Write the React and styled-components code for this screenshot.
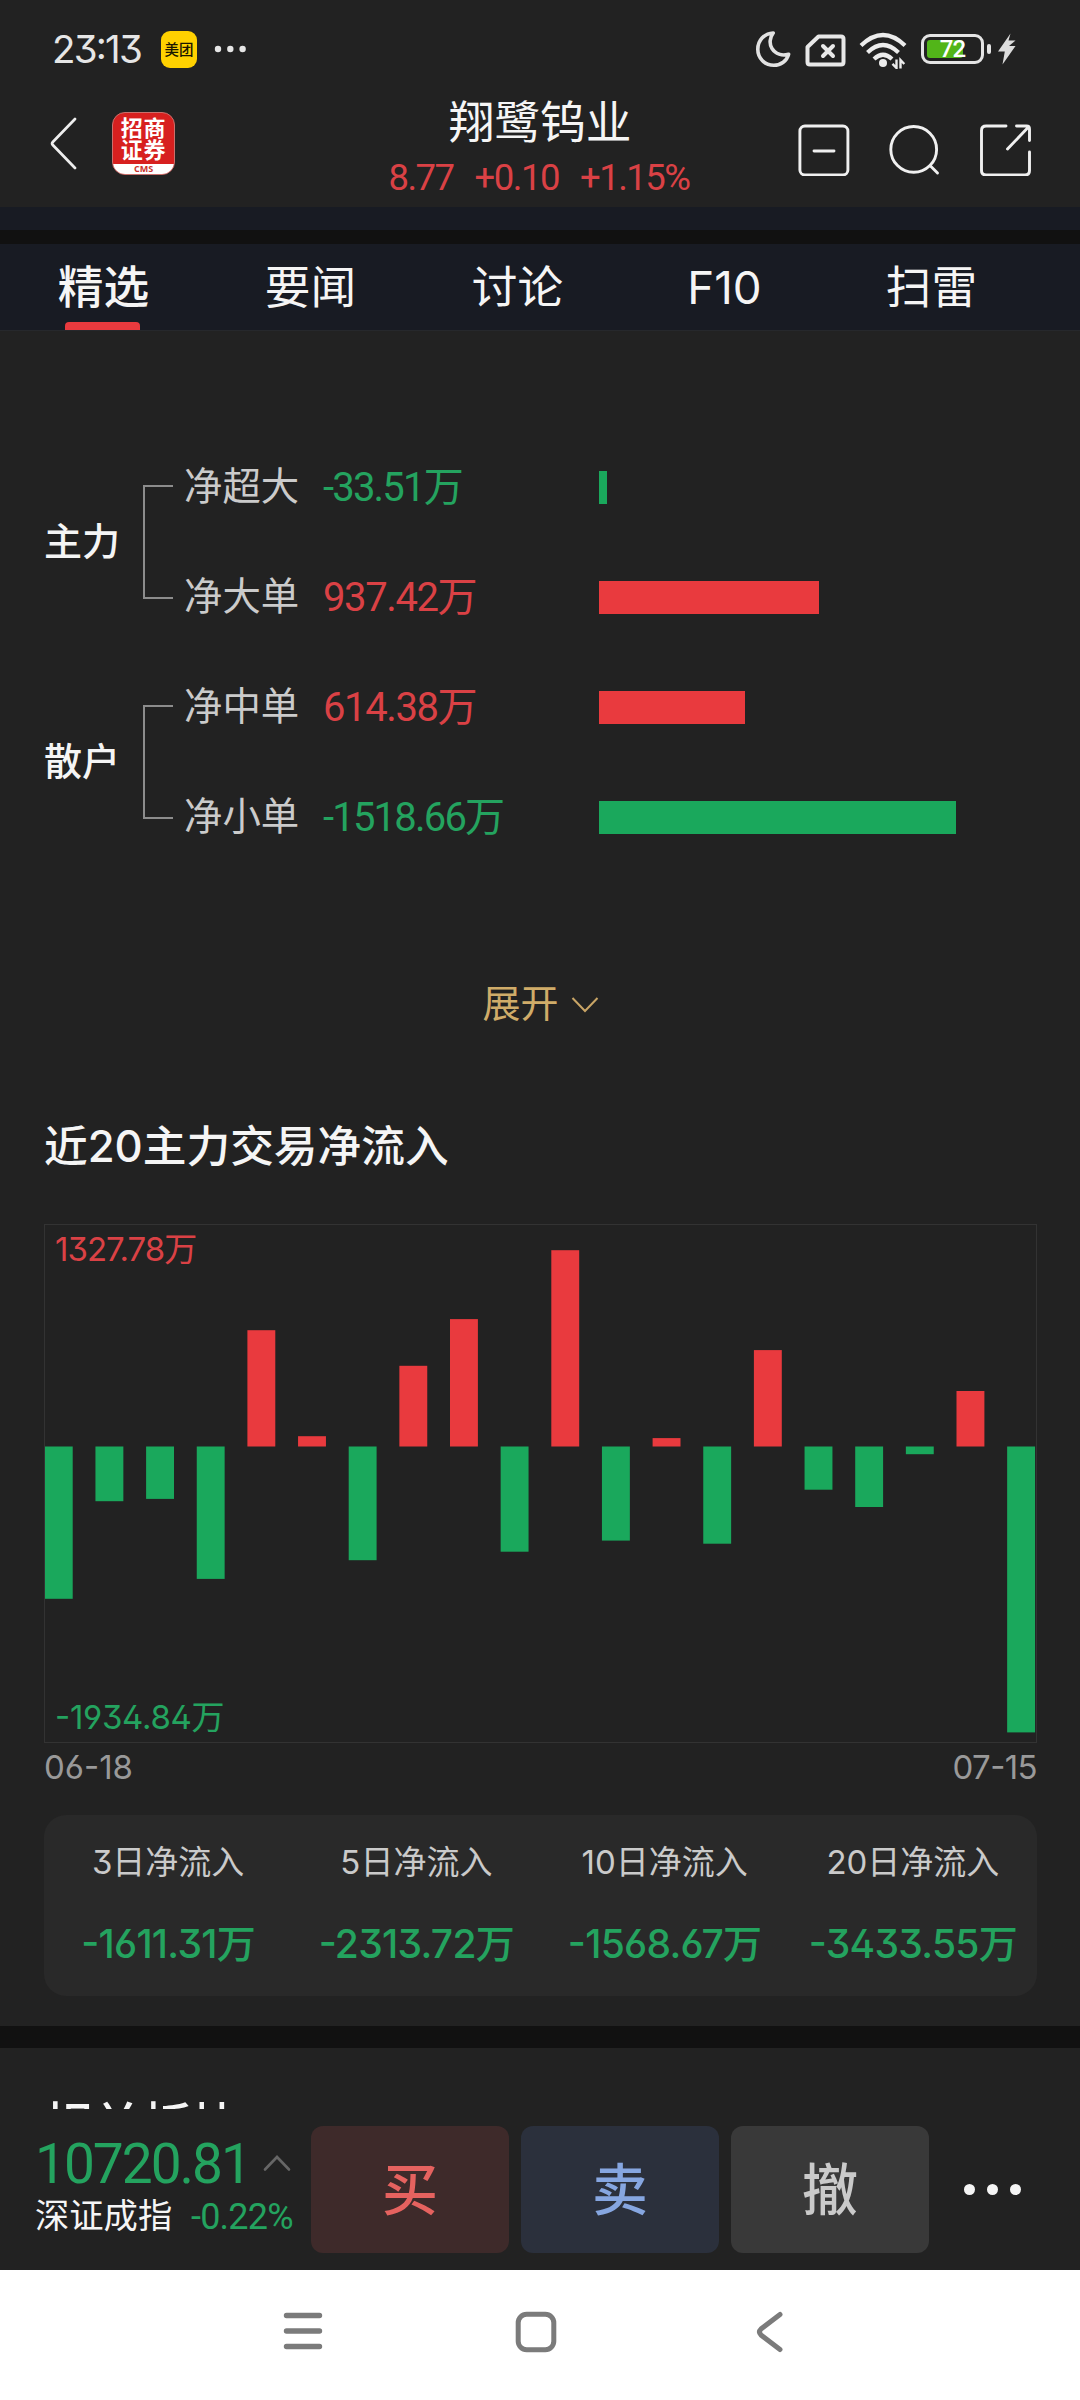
import React from "react";
import styled, { createGlobalStyle } from "styled-components";

const RED = "#e93a3e";
const GREEN = "#1aa85c";
const TEXT_RED = "#da4145";
const TEXT_GREEN = "#24a35f";

const tabs = ["精选", "要闻", "讨论", "F10", "扫雷"];

const groups = [
  {
    name: "主力",
    rows: [
      { label: "净超大", value: "-33.51万", width: 8 },
      { label: "净大单", value: "937.42万", width: 220, up: true },
    ],
  },
  {
    name: "散户",
    rows: [
      { label: "净中单", value: "614.38万", width: 146, up: true },
      { label: "净小单", value: "-1518.66万", width: 357 },
    ],
  },
];

// net inflow of the last 20 days, in bar pixels
const days = [
  -152.3, -54.7, -52.4, -132.4, 116.3, 10.3, -113.7, 80.7, 127.4, -105.2, 196.3,
  -94.1, 8.4, -97.2, 96.4, -43.2, -60.5, -7.7, 55.5, -285.9,
];

const sums = [
  { label: "3日净流入", value: "-1611.31万" },
  { label: "5日净流入", value: "-2313.72万" },
  { label: "10日净流入", value: "-1568.67万" },
  { label: "20日净流入", value: "-3433.55万" },
];

export default function App() {
  return (
    <Screen>
      <GlobalStyle />
      <StatusBar />
      <Header />
      <Strip />
      <Divider $height="14px" />
      <Tabs>
        {tabs.map((tab, i) => (
          <Tab key={tab} $active={i === 0}>
            {tab}
          </Tab>
        ))}
      </Tabs>
      <Content>
        <Flows>
          {groups.map((group) => (
            <Group key={group.name}>
              <GroupName>{group.name}</GroupName>
              <Bracket />
              <div>
                {group.rows.map((row) => (
                  <FlowRow key={row.label}>
                    <FlowLabel>{row.label}</FlowLabel>
                    <FlowValue $up={row.up}>{row.value}</FlowValue>
                    <FlowBar $up={row.up} style={{ width: row.width }} />
                  </FlowRow>
                ))}
              </div>
            </Group>
          ))}
        </Flows>
        <Expand>
          <span>展开</span>
          <svg width="28" height="18" viewBox="0 0 28 18" fill="none">
            <path d="M1.5 2 L14 15 L26.5 2" stroke="#c9a566" strokeWidth="2" />
          </svg>
        </Expand>
        <h2>近20主力交易净流入</h2>
        <DayChart />
        <Dates>
          <span>06-18</span>
          <span>07-15</span>
        </Dates>
        <Sums>
          {sums.map((sum) => (
            <div key={sum.label}>
              <p>{sum.label}</p>
              <strong>{sum.value}</strong>
            </div>
          ))}
        </Sums>
      </Content>
      <Divider $height="22px" />
      <NextSection>
        <h2>相关板块</h2>
      </NextSection>
      <TradeBar>
        <IndexBox>
          <div>
            <IndexValue>10720.81</IndexValue>
            <svg width="28" height="18" viewBox="0 0 28 18" fill="none">
              <path d="M2 15.5 L14 3 L26 15.5" stroke="#666" strokeWidth="2.6" strokeLinecap="round" />
            </svg>
          </div>
          <div>
            <IndexName>深证成指</IndexName>
            <IndexChange>-0.22%</IndexChange>
          </div>
        </IndexBox>
        <TradeButton $bg="#3e2a2a" $color="#e5625f">买</TradeButton>
        <TradeButton $bg="#2b303c" $color="#86a6e0">卖</TradeButton>
        <TradeButton $bg="#393939" $color="#cacaca">撤</TradeButton>
        <MoreButton>
          <i />
          <i />
          <i />
        </MoreButton>
      </TradeBar>
      <NavBar>
        <svg width="40" height="40" viewBox="0 0 40 40" stroke="#7b7b7b" strokeWidth="5.4" strokeLinecap="round">
          <path d="M3.5 4.5 H36.5 M3.5 20 H36.5 M3.5 35.5 H36.5" />
        </svg>
        <svg width="42" height="42" viewBox="0 0 42 42" fill="none" stroke="#7b7b7b" strokeWidth="5">
          <rect x="3.2" y="3.2" width="35.6" height="35.6" rx="8.5" />
        </svg>
        <svg width="28" height="42" viewBox="0 0 28 42" fill="none" stroke="#7b7b7b" strokeWidth="5" strokeLinecap="round">
          <path d="M24 3.5 L5 18 Q2 21 5 24 L24 38.5" />
        </svg>
      </NavBar>
    </Screen>
  );
}

function StatusBar() {
  return (
    <Status>
      <Clock>23:13</Clock>
      <Meituan>美团</Meituan>
      <svg width="32" height="10" viewBox="0 0 32 10" fill="#e6e6e6">
        <circle cx="4" cy="5" r="3.2" />
        <circle cx="16.3" cy="5" r="3.2" />
        <circle cx="28.6" cy="5" r="3.2" />
      </svg>
      <StatusIcons>
        {/* do not disturb */}
        <svg width="36" height="38" viewBox="0 0 36 38" fill="none" stroke="#e2e2e2" strokeWidth="3.6" strokeLinejoin="round">
          <path d="M18.2 3 C9 3.6 2.8 10.5 2.8 19.3 C2.8 28.5 10 35.3 18.8 35.3 C26 35.3 31.8 30.9 33.6 24.2 C27 26 20.5 24 17 18.6 C14 13.8 14.8 7.5 18.2 3 Z" />
        </svg>
        {/* no sim card */}
        <svg width="41" height="33" viewBox="0 0 41 33" fill="none" stroke="#e8e8e8" strokeWidth="4">
          <path d="M13.5 2.5 H36 Q38.5 2.5 38.5 5 V28 Q38.5 30.5 36 30.5 H5 Q2.5 30.5 2.5 28 V13 Z" strokeLinejoin="round" />
          <path d="M18 12 L28 22 M28 12 L18 22" strokeLinecap="round" />
        </svg>
        {/* wifi with traffic arrows */}
        <svg width="48" height="38" viewBox="0 0 48 38" fill="none" stroke="#ececec" strokeWidth="4.2">
          <path d="M2 14.5 Q24 -6.5 46 14.5" />
          <path d="M8.5 21.5 Q24 6.5 39.5 21.5" />
          <path d="M15 28 Q24 19.5 33 28" />
          <circle cx="24" cy="32" r="4" fill="#ececec" stroke="none" />
          <path d="M37.5 28.5 V37 L33.5 32.8 M41.5 37.5 V29 L45.3 33" strokeWidth="2.4" />
        </svg>
        <Battery>
          <BatteryLevel />
          <span>72</span>
        </Battery>
        <BatteryCap />
        <svg width="20" height="32" viewBox="0 0 20 32" fill="#dcdcdc">
          <path d="M13.5 0.5 L1 18.5 H7.8 L5.5 31.5 L18.5 13 H12 L18.5 7.5 H11.5 Z" />
        </svg>
      </StatusIcons>
    </Status>
  );
}

function Header() {
  return (
    <Head>
      <HeadLeft>
        <svg width="28" height="54" viewBox="0 0 28 54" fill="none" stroke="#eee" strokeWidth="2.7" strokeLinecap="round">
          <path d="M25 2 L2.8 25 Q1.4 26.5 2.8 28 L25 51" />
        </svg>
        <Logo>
          <span>招商</span>
          <span>证券</span>
          <small>CMS</small>
        </Logo>
      </HeadLeft>
      <HeadTitle>
        <h1>翔鹭钨业</h1>
        <Quote>
          <span>8.77</span>
          <span>+0.10</span>
          <span>+1.15%</span>
        </Quote>
      </HeadTitle>
      <HeadRight>
        <svg width="52" height="52" viewBox="0 0 52 52" fill="none" stroke="#f0f0f0" strokeWidth="2.9">
          <rect x="1.9" y="2" width="48" height="49" rx="5" />
          <path d="M16 27 H36" strokeLinecap="round" />
        </svg>
        <svg width="52" height="52" viewBox="0 0 52 52" fill="none" stroke="#f0f0f0" strokeWidth="2.9">
          <circle cx="24.7" cy="25.4" r="22.9" />
          <path d="M41.5 42 L48.5 49" strokeLinecap="round" />
        </svg>
        <svg width="52" height="52" viewBox="0 0 52 52" fill="none" stroke="#f0f0f0" strokeWidth="2.9" strokeLinecap="round">
          <path d="M26 2 H6.2 Q1.5 2 1.5 6.5 V46.5 Q1.5 51 6.2 51 H45 Q49.5 51 49.5 46.5 V28" />
          <path d="M36.5 2 H46.5 Q49.5 2 49.5 5 V16.5 M48 3.5 L27.5 25" />
        </svg>
      </HeadRight>
    </Head>
  );
}

function DayChart() {
  return (
    <ChartBox>
      <svg width="991" height="517" viewBox="0 0 991 517">
        {days.map((h, i) => (
          <rect
            key={i}
            x={-0.2 + i * 50.65}
            y={h > 0 ? 221.5 - h : 221.5}
            width="27.9"
            height={Math.abs(h)}
            fill={h > 0 ? RED : GREEN}
          />
        ))}
      </svg>
      <ChartMax>1327.78万</ChartMax>
      <ChartMin>-1934.84万</ChartMin>
    </ChartBox>
  );
}

const GlobalStyle = createGlobalStyle`
  * {
    box-sizing: border-box;
  }
  body {
    margin: 0;
    background: #222;
    font-family: Inter, "Noto Sans CJK SC", sans-serif;
    font-feature-settings: "cv02", "cv03", "cv04", "cv09", "case";
  }
  h1, h2, p {
    margin: 0;
  }
  svg {
    display: block;
    flex-shrink: 0;
  }
`;

const Screen = styled.div`
  width: 1080px;
  height: 2400px;
  overflow: hidden;
  display: flex;
  flex-direction: column;
  background: #222;
  color: #f5f5f5;
  white-space: nowrap;
  > * {
    flex-shrink: 0;
  }
`;

const Status = styled.div`
  height: 98px;
  padding: 0 63px 0 52px;
  display: flex;
  align-items: center;
`;

const Clock = styled.span`
  width: 109px;
  color: #e6e6e6;
  font-size: 38.5px;
  line-height: 38px;
  letter-spacing: -1.8px;
`;

const Meituan = styled.span`
  width: 36px;
  height: 37px;
  margin-right: 17px;
  border-radius: 9px;
  background: #ffd100;
  color: #1a1600;
  font-size: 14.5px;
  font-weight: 500;
  line-height: 37px;
  text-align: center;
`;

const StatusIcons = styled.div`
  margin-left: auto;
  display: flex;
  align-items: center;
  svg:nth-child(1) {
    margin-right: 14px;
  }
  svg:nth-child(2) {
    margin: 3px 13px 0 0;
  }
  svg:nth-child(3) {
    margin: 2px 14px 0 0;
  }
  svg:last-child {
    margin-left: 6px;
  }
`;

const Battery = styled.div`
  position: relative;
  width: 63px;
  height: 30px;
  border: 3px solid #e4e4e4;
  border-radius: 9px;
  span {
    position: absolute;
    inset: 0;
    color: #fff;
    font-family: Roboto, sans-serif;
    font-size: 24px;
    font-weight: 500;
    line-height: 25px;
    letter-spacing: -1px;
    text-align: center;
  }
`;

const BatteryLevel = styled.div`
  width: 36px;
  height: 18px;
  margin: 3px;
  border-radius: 3px;
  background: #52b519;
`;

const BatteryCap = styled.div`
  width: 4px;
  height: 10px;
  margin-left: 3px;
  border-radius: 2px;
  background: #e4e4e4;
`;

const Head = styled.header`
  height: 109px;
  padding: 0 48px;
  display: grid;
  grid-template-columns: 1fr auto 1fr;
`;

const HeadLeft = styled.div`
  padding-top: 14px;
  display: flex;
  align-items: flex-start;
  gap: 36px;
  > svg {
    margin: 5px 0 0 2px;
  }
`;

const Logo = styled.div`
  width: 63px;
  height: 63px;
  margin-left: -2px;
  padding-top: 4px;
  overflow: hidden;
  display: flex;
  flex-direction: column;
  align-items: center;
  border: 1px solid #c9706c;
  border-radius: 13px;
  background: #d7201f;
  color: #fff;
  span {
    font-size: 22px;
    font-weight: 600;
    line-height: 22px;
    letter-spacing: 0.8px;
  }
  small {
    width: 100%;
    height: 12px;
    margin-top: 3px;
    background: #fff;
    color: #c8322c;
    font-family: "Open Sans", sans-serif;
    font-size: 9px;
    font-weight: 700;
    line-height: 10px;
    text-align: center;
  }
`;

const HeadTitle = styled.div`
  display: flex;
  flex-direction: column;
  align-items: center;
  h1 {
    margin-top: 2px;
    font-size: 45.7px;
    font-weight: 400;
    line-height: 46px;
  }
`;

const Quote = styled.div`
  margin: 9px 2px 0 0;
  display: flex;
  gap: 21px;
  color: ${TEXT_RED};
  font-family: Roboto, sans-serif;
  font-size: 36.5px;
  line-height: 46px;
  letter-spacing: -1.5px;
`;

const HeadRight = styled.div`
  padding-top: 26px;
  display: flex;
  justify-content: flex-end;
  gap: 39px;
`;

const Strip = styled.div`
  height: 23px;
  background: #181b23;
`;

const Divider = styled.div`
  height: ${(props) => props.$height};
  background: #111;
`;

const Tabs = styled.nav`
  height: 87px;
  display: flex;
  background: #181b23;
  border-bottom: 1px solid #26282c;
`;

const Tab = styled.div`
  position: relative;
  width: 207px;
  font-size: 45.7px;
  font-weight: ${(props) => (props.$active ? 500 : 400)};
  line-height: 88px;
  text-align: center;
  &::after {
    content: "";
    display: ${(props) => (props.$active ? "block" : "none")};
    position: absolute;
    left: 65px;
    bottom: 0;
    width: 75px;
    height: 8px;
    border-radius: 4px 4px 0 0;
    background: ${RED};
  }
`;

const Content = styled.main`
  height: 1695px;
  padding: 101px 43px 0 44px;
  display: flex;
  flex-direction: column;
  h2 {
    height: 60px;
    margin-top: 82px;
    font-size: 43.7px;
    font-weight: 500;
    line-height: 60px;
  }
`;

const Flows = styled.section`
  display: flex;
  flex-direction: column;
`;

const Group = styled.div`
  height: 220px;
  display: flex;
  align-items: center;
`;

const GroupName = styled.div`
  width: 99px;
  padding-bottom: 7px;
  font-size: 38px;
  font-weight: 500;
`;

const Bracket = styled.div`
  width: 30px;
  height: 114px;
  margin-right: 11px;
  border: 2px solid #8c8c8c;
  border-right: none;
`;

const FlowRow = styled.div`
  height: 110px;
  display: flex;
  align-items: center;
`;

const FlowLabel = styled.span`
  width: 139px;
  padding-bottom: 8px;
  color: #cbcbcb;
  font-size: 38.4px;
`;

const FlowValue = styled.span`
  width: 276px;
  padding-bottom: 7px;
  color: ${(props) => (props.$up ? TEXT_RED : TEXT_GREEN)};
  font-family: Roboto, "Noto Sans CJK SC", sans-serif;
  font-size: 40px;
  letter-spacing: ${(props) => (props.$up ? "-1.4px" : "-1.8px")};
`;

const FlowBar = styled.div`
  height: 33px;
  background: ${(props) => (props.$up ? RED : GREEN)};
`;

const Expand = styled.div`
  height: 60px;
  margin-top: 103px;
  display: flex;
  align-items: center;
  justify-content: center;
  gap: 12px;
  color: #d0ac69;
  font-size: 38px;
  span {
    padding-bottom: 9px;
  }
`;

const ChartBox = styled.section`
  position: relative;
  width: 993px;
  height: 519px;
  margin-top: 47px;
  border: 1px solid #333;
`;

const ChartMax = styled.span`
  position: absolute;
  left: 10px;
  top: 4px;
  color: ${TEXT_RED};
  font-size: 33px;
  line-height: 40px;
  letter-spacing: -1px;
`;

const ChartMin = styled(ChartMax)`
  top: auto;
  bottom: 5px;
  color: ${TEXT_GREEN};
  letter-spacing: -0.3px;
`;

const Dates = styled.div`
  height: 72px;
  padding-top: 4px;
  display: flex;
  justify-content: space-between;
  color: #999;
  font-size: 33px;
  line-height: 40px;
  span:last-child {
    letter-spacing: -0.6px;
  }
`;

const Sums = styled.section`
  width: 993px;
  height: 181px;
  display: grid;
  grid-template-columns: repeat(4, 1fr);
  border-radius: 22px;
  background: #292929;
  text-align: center;
  p {
    margin-top: 27px;
    color: #cacaca;
    font-size: 33px;
    line-height: 40px;
  }
  strong {
    display: block;
    margin-top: 42px;
    color: ${TEXT_GREEN};
    font-size: 39px;
    font-weight: 500;
    line-height: 40px;
    letter-spacing: -0.7px;
  }
`;

const NextSection = styled.section`
  height: 61px;
  padding: 48px 43px 0;
  overflow: hidden;
  h2 {
    font-size: 49.5px;
    font-weight: 500;
    line-height: 60px;
  }
`;

const TradeBar = styled.footer`
  height: 161px;
  padding: 17px 0 0 35px;
  display: flex;
  gap: 12px;
`;

const IndexBox = styled.div`
  width: 264px;
  padding-top: 12px;
  > div {
    display: flex;
    align-items: center;
  }
  svg {
    margin-bottom: 2px;
  }
`;

const IndexValue = styled.span`
  width: 228px;
  color: ${TEXT_GREEN};
  font-family: Roboto, sans-serif;
  font-size: 55px;
  line-height: 52px;
  letter-spacing: -2px;
`;

const IndexName = styled.span`
  width: 156px;
  font-size: 34.3px;
  line-height: 50px;
`;

const IndexChange = styled.span`
  padding-top: 2px;
  color: ${TEXT_GREEN};
  font-family: Roboto, sans-serif;
  font-size: 36px;
  line-height: 50px;
  letter-spacing: -0.8px;
`;

const TradeButton = styled.button`
  width: 198px;
  height: 127px;
  padding: 0 0 7px;
  border: none;
  border-radius: 12px;
  background: ${(props) => props.$bg};
  color: ${(props) => props.$color};
  font-family: "Noto Sans CJK SC", sans-serif;
  font-size: 56px;
  font-weight: 500;
  line-height: 120px;
`;

const MoreButton = styled.div`
  height: 127px;
  padding-left: 23px;
  display: flex;
  align-items: center;
  gap: 12px;
  i {
    width: 11px;
    height: 11px;
    border-radius: 50%;
    background: #f5f5f5;
  }
`;

const NavBar = styled.nav`
  height: 130px;
  padding: 41px 0 0 283px;
  display: flex;
  align-items: flex-start;
  background: #fff;
  svg:nth-child(2) {
    margin-left: 192px;
  }
  svg:nth-child(3) {
    margin-left: 199px;
  }
`;
